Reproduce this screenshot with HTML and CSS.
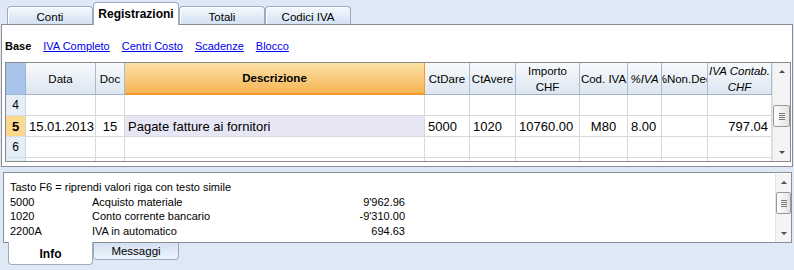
FILE: index.html
```html
<!doctype html>
<html>
  <head>
    <title>Registrazioni</title>
    <link rel="stylesheet" href="styles.css">
  </head>
  <body>
    <div class="tabbar">
      <div class="tab">Conti</div>
      <div class="tab active">Registrazioni</div>
      <div class="tab">Totali</div>
      <div class="tab">Codici IVA</div>
    </div>

    <div class="panel">
      <div class="views">
        <b>Base</b>
        <a href="#">IVA Completo</a>
        <a href="#">Centri Costo</a>
        <a href="#">Scadenze</a>
        <a href="#">Blocco</a>
      </div>

      <div class="gridbox">
        <div class="table">
          <div class="corner"></div>
          <div class="hd"><span>Data</span></div>
          <div class="hd"><span>Doc</span></div>
          <div class="hd sel"><span>Descrizione</span></div>
          <div class="hd"><span>CtDare</span></div>
          <div class="hd"><span>CtAvere</span></div>
          <div class="hd"><span>Importo<br>CHF</span></div>
          <div class="hd"><span>Cod. IVA</span></div>
          <div class="hd it"><span>%IVA</span></div>
          <div class="hd"><span>%Non.Ded</span></div>
          <div class="hd it"><span>IVA Contab.<br>CHF</span></div>

          <div class="rh">4</div>
          <div class="c"></div><div class="c"></div><div class="c"></div><div class="c"></div><div class="c"></div>
          <div class="c"></div><div class="c"></div><div class="c"></div><div class="c"></div><div class="c"></div>

          <div class="rh cur">5</div>
          <div class="c">15.01.2013</div>
          <div class="c mid">15</div>
          <div class="c focus">Pagate fatture ai fornitori</div>
          <div class="c">5000</div>
          <div class="c">1020</div>
          <div class="c">10760.00</div>
          <div class="c mid">M80</div>
          <div class="c">8.00</div>
          <div class="c"></div>
          <div class="c right">797.04</div>

          <div class="rh">6</div>
          <div class="c"></div><div class="c"></div><div class="c"></div><div class="c"></div><div class="c"></div>
          <div class="c"></div><div class="c"></div><div class="c"></div><div class="c"></div><div class="c"></div>

          <div class="rh"></div>
          <div class="c"></div><div class="c"></div><div class="c"></div><div class="c"></div><div class="c"></div>
          <div class="c"></div><div class="c"></div><div class="c"></div><div class="c"></div><div class="c"></div>
        </div>
        <div class="vscroll big">
          <div class="sbtn up"></div>
          <div class="thumb"></div>
          <div class="track"></div>
          <div class="sbtn down"></div>
        </div>
      </div>
    </div>

    <div class="infobox">
      <div class="info">
        <div class="irow">Tasto F6 = riprendi valori riga con testo simile</div>
        <div class="irow"><span class="acct">5000</span><span class="desc">Acquisto materiale</span><span class="num">9'962.96</span></div>
        <div class="irow"><span class="acct">1020</span><span class="desc">Conto corrente bancario</span><span class="num">-9'310.00</span></div>
        <div class="irow"><span class="acct">2200A</span><span class="desc">IVA in automatico</span><span class="num">694.63</span></div>
      </div>
      <div class="vscroll small">
        <div class="sbtn up"></div>
        <div class="thumb"></div>
        <div class="track"></div>
        <div class="sbtn down"></div>
      </div>
    </div>

    <div class="btabs">
      <div class="btab active">Info</div>
      <div class="btab">Messaggi</div>
    </div>
  </body>
</html>
```

FILE: styles.css
```css
body {
  margin: 0;
  background: #dfe9f5;
  font-family: "Liberation Sans", Arial, sans-serif;
  font-size: 11px;
  color: #000;
}

/* top tabs */
.tabbar {
  display: flex;
  align-items: flex-end;
  height: 24px;
  padding-left: 7px;
}

.tab {
  box-sizing: border-box;
  width: 86px;
  height: 18px;
  padding-top: 2px;
  border: 1px solid #9cabc0;
  border-bottom: none;
  border-radius: 4px 4px 0 0;
  background: linear-gradient(#f6f9fd, #d3e1f3);
  box-shadow: inset 1px 1px 0 #fff;
  display: flex;
  align-items: center;
  justify-content: center;
  font-size: 11.5px;
}

.tab.active {
  position: relative;
  height: 23px;
  padding: 0 0 1px;
  margin-bottom: -1px;
  background: #fff;
  font-weight: bold;
  font-size: 12px;
}

.panel {
  margin: 0 1px;
  border: 1px solid #8b8e96;
  background: #fff;
}

.views {
  box-sizing: border-box;
  display: flex;
  align-items: center;
  gap: 12px;
  height: 37px;
  padding: 5px 0 0 3px;
}

.views a {
  color: #0000f0;
}

/* grid */
.gridbox {
  display: flex;
  height: 100px;
  box-sizing: border-box;
  margin: 0 1px 4px 3px;
  border: 1px solid #8a8a8a;
}

.table {
  flex: 1;
  display: grid;
  grid-template-columns: 20px 70px 29px 300px 45px 46px 64px 48px 34px 46px 64px;
  grid-template-rows: 32px 21px 21px 21px 21px;
  overflow: hidden;
}

.table > div {
  box-sizing: border-box;
  display: flex;
  align-items: center;
  overflow: hidden;
  white-space: nowrap;
  border-right: 1px solid #d9d9d9;
  border-bottom: 1px solid #d9d9d9;
}

.table > .corner {
  background: #a9c4ea;
  border-right: 1px solid #9fb6d2;
  border-bottom: 1px solid #9fb6d2;
}

.table > .hd {
  justify-content: center;
  text-align: center;
  font-size: 11.5px;
  line-height: 16px;
  background: linear-gradient(#f9fbfd, #dce5f0);
  border-right: 1px solid #a6bbd3;
  border-bottom: 1px solid #9fb4cc;
}

.table > .hd.it {
  font-style: italic;
}

.table > .hd.sel {
  font-weight: bold;
  background: linear-gradient(#fce0a6, #f6b655);
  border-right: 1px solid #f39a2a;
  border-bottom: 2px solid #f39a2a;
}

.table > .rh {
  justify-content: center;
  font-size: 12px;
  background: #e5edf7;
  border-right: 1px solid #c8d5e5;
  border-bottom: 1px solid #d3dce8;
}

.table > .rh.cur {
  background: #fdd88f;
  font-weight: bold;
  font-size: 13px;
}

.table > .c {
  padding: 0 3px;
  font-size: 13px;
}

.table > .c.mid {
  justify-content: center;
}

.table > .c.right {
  justify-content: flex-end;
}

.table > .c.focus {
  background: #e7e6f5;
}

/* scrollbars */
.vscroll {
  box-sizing: border-box;
  display: flex;
  flex-direction: column;
  width: 18px;
  background: #f4f4f6;
  border-left: 1px solid #e4e4e8;
}

.vscroll.small {
  width: 16px;
  margin: 1px 0 0;
}

.sbtn {
  height: 17px;
  display: flex;
  align-items: center;
  justify-content: center;
}

.sbtn.up::before {
  content: "";
  border-left: 3px solid transparent;
  border-right: 3px solid transparent;
  border-bottom: 3px solid #4a4a4a;
}

.sbtn.down::before {
  content: "";
  border-left: 3px solid transparent;
  border-right: 3px solid transparent;
  border-top: 3px solid #4a4a4a;
}

.thumb {
  box-sizing: border-box;
  height: 22px;
  margin: 25px 0 0;
  border: 1px solid #999;
  border-radius: 2px;
  background: linear-gradient(90deg, #fefefe, #e2e2e4);
  display: flex;
  align-items: center;
  justify-content: center;
}

.small .thumb {
  margin-top: 1px;
}

.thumb::before {
  content: "";
  width: 6px;
  height: 7px;
  background: repeating-linear-gradient(#777 0 1px, transparent 1px 2px);
}

.track {
  flex: 1;
}

/* info pane */
.infobox {
  box-sizing: border-box;
  display: flex;
  height: 71px;
  margin: 5px 2px 0 3px;
  border: 1px solid #8b8e96;
  background: #fff;
}

.info {
  flex: 1;
  padding: 7px 0 0 6px;
  line-height: 14.5px;
}

.irow {
  display: flex;
  white-space: nowrap;
}

.irow .acct {
  flex: none;
  width: 82px;
}

.irow .desc {
  flex: none;
  width: 240px;
}

.irow .num {
  flex: none;
  width: 73px;
  text-align: right;
}

/* bottom tabs */
.btabs {
  display: flex;
  align-items: flex-start;
  padding-left: 8px;
}

.btab {
  box-sizing: border-box;
  width: 86px;
  height: 17px;
  border: 1px solid #9cabc0;
  border-top: none;
  border-radius: 0 0 4px 4px;
  background: linear-gradient(#d3e1f3, #eef4fb);
  display: flex;
  align-items: center;
  justify-content: center;
  font-size: 11.5px;
}

.btab.active {
  position: relative;
  width: 85px;
  height: 23px;
  margin-top: -1px;
  padding-top: 1px;
  background: #fff;
  font-weight: bold;
  font-size: 12px;
}
```
